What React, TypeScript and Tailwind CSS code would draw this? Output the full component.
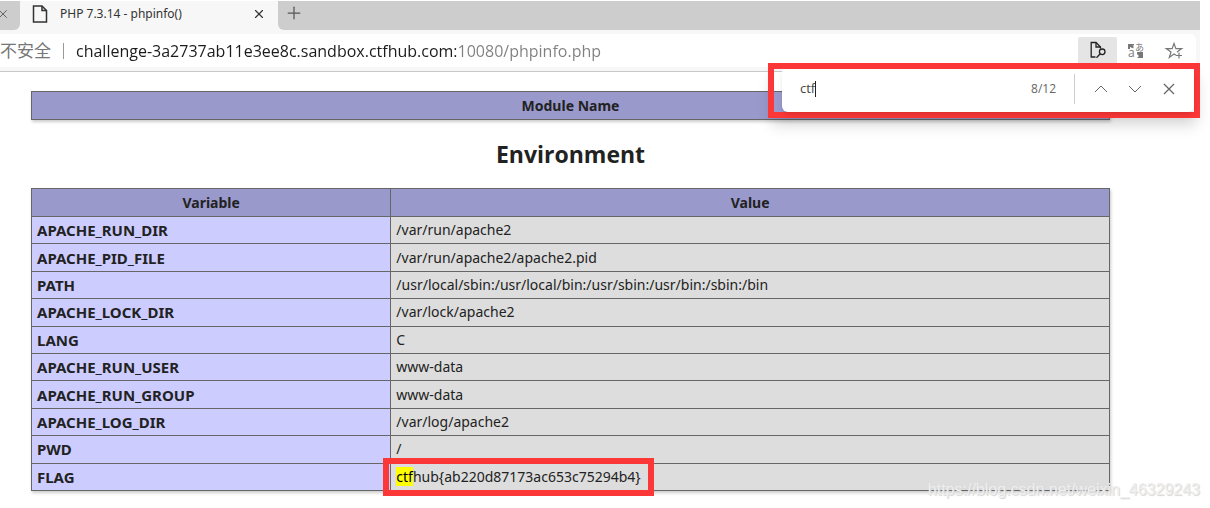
import { ChevronDown, ChevronUp, Plus, X } from "lucide-react";

const variables = [
  { name: "APACHE_RUN_DIR", value: "/var/run/apache2" },
  { name: "APACHE_PID_FILE", value: "/var/run/apache2/apache2.pid" },
  {
    name: "PATH",
    value: "/usr/local/sbin:/usr/local/bin:/usr/sbin:/usr/bin:/sbin:/bin",
  },
  { name: "APACHE_LOCK_DIR", value: "/var/lock/apache2" },
  { name: "LANG", value: "C" },
  { name: "APACHE_RUN_USER", value: "www-data" },
  { name: "APACHE_RUN_GROUP", value: "www-data" },
  { name: "APACHE_LOG_DIR", value: "/var/log/apache2" },
  { name: "PWD", value: "/" },
];

const TabStrip = () => {
  return (
    <div className="flex h-[29px] bg-[#f7f7f7]">
      <div className="flex w-5 items-center rounded-br-md bg-[#cdcdcd] pb-1">
        <button aria-label="Close previous tab" className="-ml-1">
          <X size={14} strokeWidth={1.5} color="#555" />
        </button>
      </div>
      <div className="flex w-[258px] items-center pr-3 pb-1 pl-3">
        <svg width="16" height="18" viewBox="0 0 16 18" fill="none" stroke="#333" strokeWidth="1.5">
          <path d="M1.5 1h8.5l4.5 4.5V17h-13z" />
          <path d="M10 1v4.5h4.5" />
        </svg>
        <span className="ml-3 flex-1 font-['Noto_Sans',sans-serif] text-xs text-[#333]">
          PHP 7.3.14 - phpinfo()
        </span>
        <button aria-label="Close tab">
          <X size={14} strokeWidth={2} color="#333" />
        </button>
      </div>
      <div className="flex flex-1 items-center rounded-bl-md bg-[#cdcdcd] pb-1.5 pl-1.5">
        <button aria-label="New tab">
          <Plus size={20} strokeWidth={1.5} color="#555" />
        </button>
      </div>
    </div>
  );
};

const AddressBar = () => {
  return (
    <div className="border-b border-[#c8c8c8] bg-[#f7f7f7] pt-1 pr-1 pb-1">
      <div className="flex h-[33px] items-center rounded-r-md bg-white">
        <span className="text-[17px] whitespace-nowrap text-[#767676]">不安全</span>
        <span className="mr-3 ml-3 h-4 w-px bg-[#999]" />
        <input
          aria-label="Address"
          className="min-w-0 flex-1 bg-[linear-gradient(90deg,#1b1b1b_380px,#808080_380px)] bg-clip-text text-base text-transparent outline-none"
          defaultValue="challenge-3a2737ab11e3ee8c.sandbox.ctfhub.com:10080/phpinfo.php"
        />
        <button
          aria-label="Find on page"
          className="flex h-[30px] w-[39px] items-start justify-center self-end rounded-t-xs bg-[#e5e5e5] pt-1"
        >
          <svg width="18" height="18" viewBox="0 0 18 18" fill="none" stroke="#222" strokeWidth="1.3">
            <path d="M6.500 16H2.200V1.500H7l4.500 4.500v1.500" />
            <path d="M7 1.500V6h4.500" />
            <circle cx="13.200" cy="10.800" r="2.800" />
            <path d="M11.200 12.800L7.500 16.800" />
          </svg>
        </button>
        <button aria-label="Translate" className="ml-[9px]">
          <svg width="20" height="20" viewBox="0 0 20 20" fill="#777">
            <text x="9" y="10" fontSize="9">あ</text>
            <text x="2" y="16" fontSize="12">a</text>
            <path d="M2 3h6v1.500H6.500l1.500 1.500-1.300 1.300L4 6v2H2z" />
            <path d="M17 11v6h-6l2-2-2-2v-2z" />
          </svg>
        </button>
        <button aria-label="Add to favorites" className="mr-3 ml-[18px]">
          <svg width="20" height="20" viewBox="0 0 20 20" fill="none" stroke="#777" strokeWidth="1.2">
            <path d="M12 14.300L10 13l-4.700 3.500 1.700-5.600L2.300 7.600h5.800L10 2.500l1.900 5.100h5.800L13 11" />
            <path d="M15 11.500v6M12 14.500h6" />
          </svg>
        </button>
      </div>
    </div>
  );
};

const FindBar = () => {
  return (
    <div className="absolute top-[62px] right-0 w-[432px] border-[6px] border-[#fc3737] pl-2 shadow-[0_10px_14px_-4px_rgba(0,0,0,0.18)]">
      <div className="flex h-[43px] items-center rounded-b-md bg-white pr-[15px] pb-1 pl-[18px] text-[#666] shadow-md">
        <input
          aria-label="Find on page text"
          className="field-sizing-content text-[13px] text-[#444] outline-none"
          defaultValue="ctf"
        />
        <span className="h-4 w-px bg-[#222]" />
        <span className="ml-auto text-xs">8/12</span>
        <span className="mr-4 ml-[18px] h-[30px] w-px bg-[#ccc]" />
        <button aria-label="Previous match">
          <svg width="20" height="20" viewBox="0 0 20 20" fill="none" stroke="currentColor">
            <path d="M4 13l6-6 6 6" />
          </svg>
        </button>
        <button aria-label="Next match" className="ml-[14px]">
          <svg width="20" height="20" viewBox="0 0 20 20" fill="none" stroke="currentColor">
            <path d="M4 7l6 6 6-6" />
          </svg>
        </button>
        <button aria-label="Close find bar" className="ml-[14px]">
          <svg width="20" height="20" viewBox="0 0 20 20" fill="none" stroke="currentColor" strokeWidth="1.3">
            <path d="M5 5l10 10M15 5L5 15" />
          </svg>
        </button>
      </div>
    </div>
  );
};

const App = () => {
  return (
    <div className="relative bg-white pt-px font-['Open_Sans','Noto_Sans_CJK_SC',sans-serif]">
      {/* Browser window */}
      <div className="relative mr-[10px]">
        <TabStrip />
        <AddressBar />
        <FindBar />
      </div>

      {/* phpinfo page */}
      <main className="pt-[19px] pr-[100px] pb-4 pl-[31px] font-['Noto_Sans',sans-serif] text-sm text-[#222]">
        <table className="w-full border-collapse shadow-[1px_2px_3px_#ccc]">
          <thead>
            <tr>
              <th className="h-7 border border-[#666] bg-[#9999cc] font-bold">
                Module Name
              </th>
            </tr>
          </thead>
        </table>
        <h2 className="py-[17px] text-center font-['Open_Sans',sans-serif] text-[23px] leading-[34px] font-bold">
          Environment
        </h2>
        <table className="h-[303px] w-full table-fixed border-collapse shadow-[1px_2px_3px_#ccc]">
          <thead>
            <tr className="bg-[#9999cc]">
              <th className="h-7 w-1/3 border border-[#666] font-bold">Variable</th>
              <th className="border border-[#666] font-bold">Value</th>
            </tr>
          </thead>
          <tbody>
            {variables.map((item) => (
              <tr key={item.name}>
                <th className="border border-[#666] bg-[#ccccff] px-[5px] text-left text-[15px] leading-5 font-bold">
                  {item.name}
                </th>
                <td className="border border-[#666] bg-[#dddddd] px-[5px]">
                  {item.value}
                </td>
              </tr>
            ))}
            <tr>
              <th className="border border-[#666] bg-[#ccccff] px-[5px] text-left text-[15px] leading-5 font-bold">
                FLAG
              </th>
              <td className="border border-[#666] bg-[#dddddd] px-[5px]">
                <span className="relative inline-block">
                  <mark className="bg-[#ffff00] text-black">ctf</mark>
                  hub{"{"}ab220d87173ac653c75294b4{"}"}
                  <span className="absolute -inset-x-[13px] -inset-y-[9px] border-[6px] border-[#fc3737]" />
                </span>
              </td>
            </tr>
          </tbody>
        </table>
      </main>

      {/* Watermark */}
      <p className="absolute right-[10px] bottom-[5px] font-['Liberation_Sans',sans-serif] text-base text-[#eee] [text-shadow:1px_1px_1px_#d4d4d4]">
        https://blog.csdn.net/weixin_46329243
      </p>
    </div>
  );
};

export default App;
